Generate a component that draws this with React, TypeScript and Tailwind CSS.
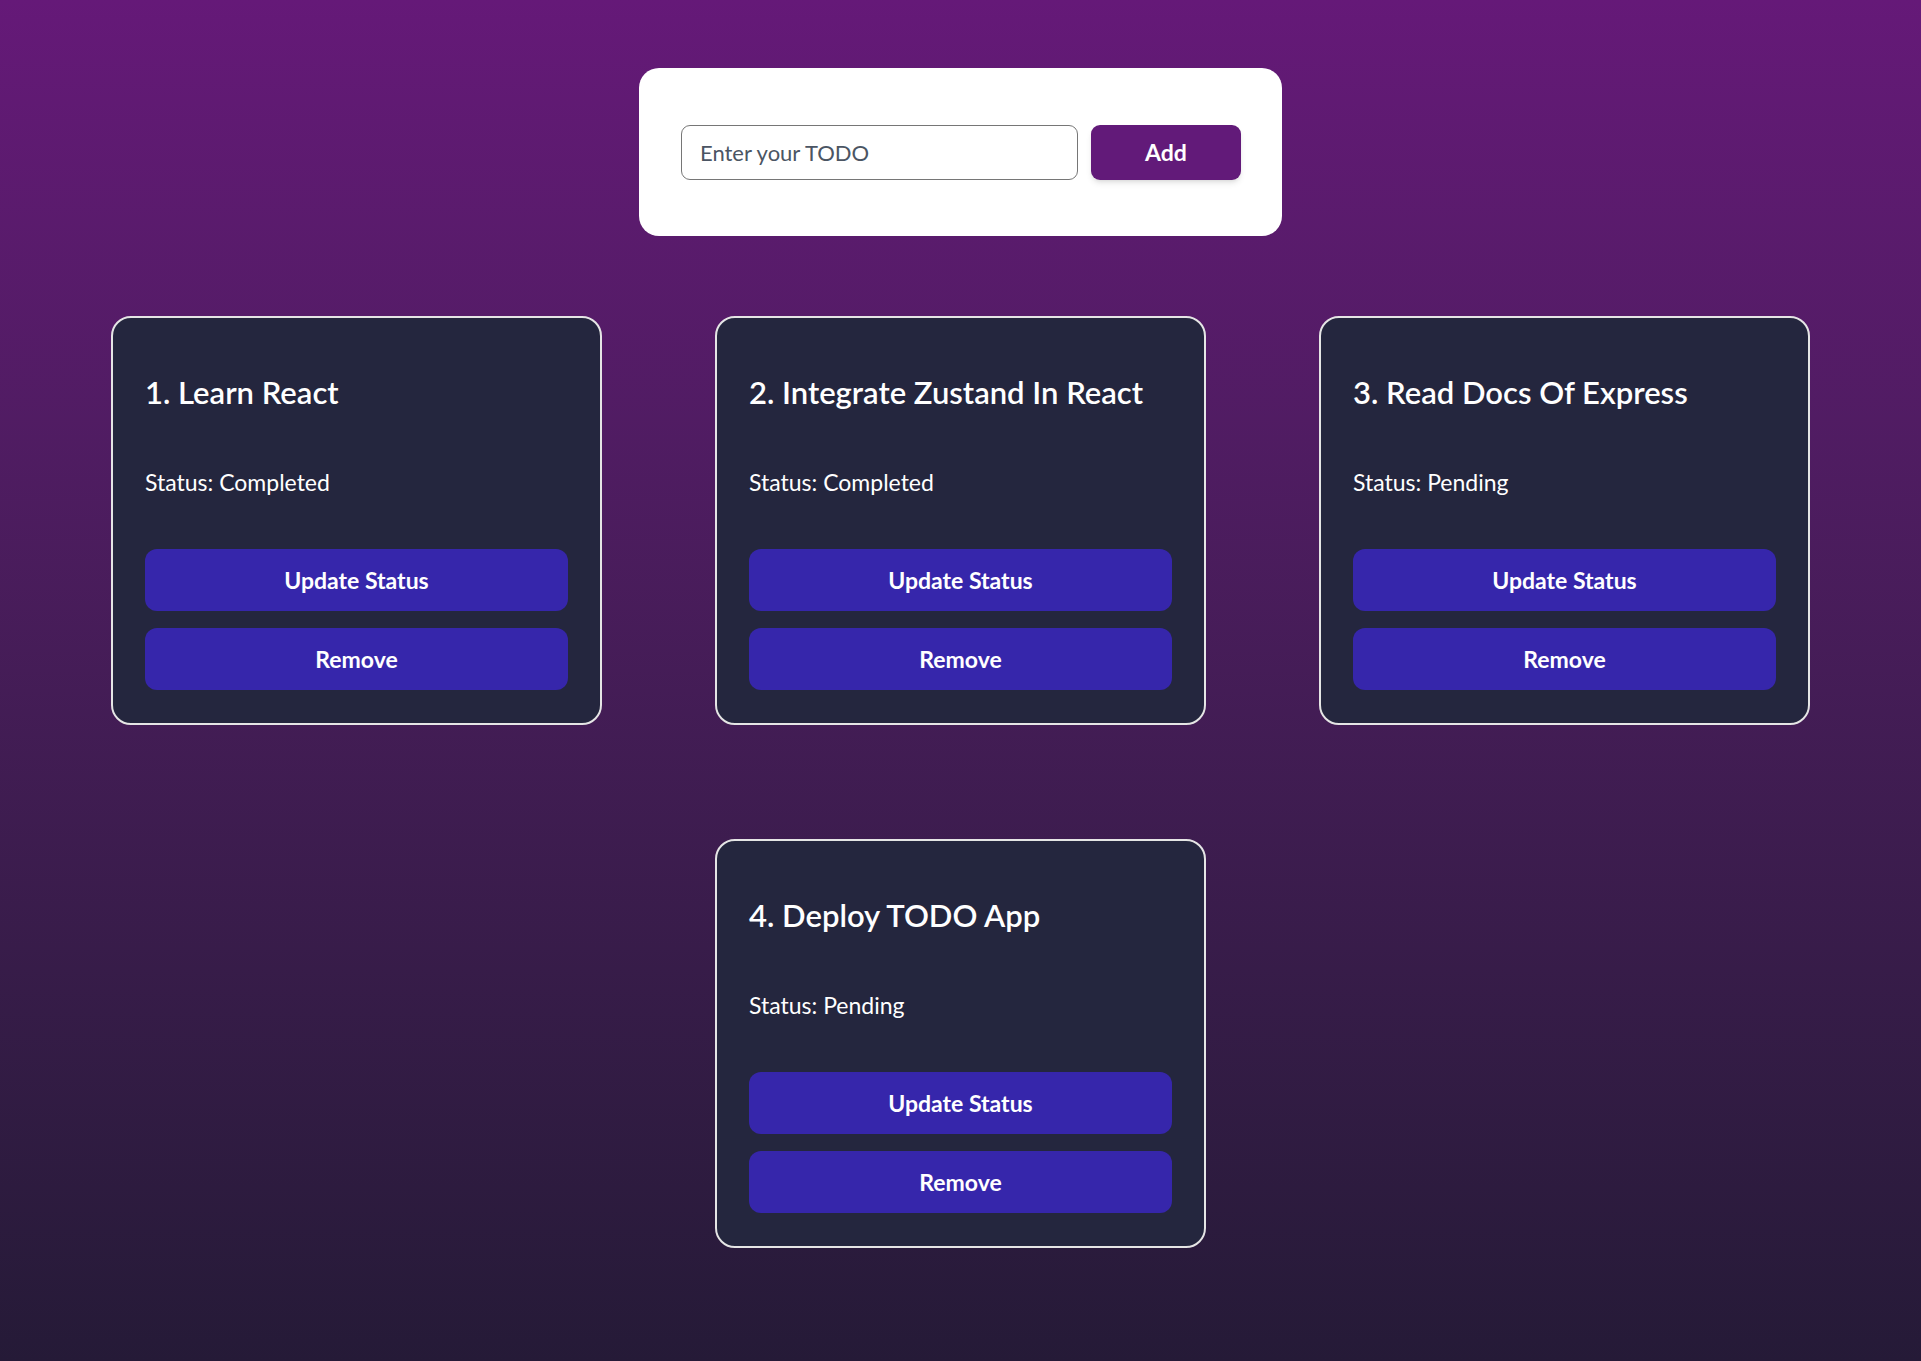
export default function App() {
  const todos = [
    { id: 1, title: 'Learn React', status: 'Completed' },
    { id: 2, title: 'Integrate Zustand In React', status: 'Completed' },
    { id: 3, title: 'Read Docs Of Express', status: 'Pending' },
    { id: 4, title: 'Deploy TODO App', status: 'Pending' },
  ]

  return (
    <div className="flex min-h-screen flex-col items-center bg-gradient-to-b from-[#651978] to-[#251a37] pt-[68px] pb-[114px] font-['Lato',sans-serif]">
      <div className="flex h-[168px] w-[643px] items-center gap-[13px] rounded-[20px] bg-white pl-[42px] pr-[40px]">
        <input
          type="text"
          placeholder="Enter your TODO"
          className="h-[55px] w-[397px] rounded-[9px] border border-[#767676] px-[18px] text-[22px] text-[#111] outline-none placeholder:text-[#4b5563]"
        />
        <button className="h-[55px] w-[150px] rounded-[9px] bg-[#621a79] text-[23px] font-bold text-white shadow-md">
          Add
        </button>
      </div>

      <div className="mt-[80px] flex w-[1700px] flex-wrap justify-center gap-x-[113px] gap-y-[114px]">
        {todos.map((todo) => (
          <div
            key={todo.id}
            className="flex w-[491px] flex-col rounded-[20px] border-2 border-[#e5e5e5] bg-[#24263e] px-[32px] pt-[32px] pb-[33px] text-white"
          >
            <h2 className="mt-[24px] text-[31px] leading-[36px] font-semibold">
              {todo.id}. {todo.title}
            </h2>
            <p className="mt-[57px] text-[23px] leading-[30px]">
              Status: {todo.status}
            </p>
            <div className="mt-[52px] flex flex-col gap-[17px]">
              <button className="h-[62px] w-full rounded-[12px] bg-[#3626ab] text-[23px] font-bold text-white">
                Update Status
              </button>
              <button className="h-[62px] w-full rounded-[12px] bg-[#3626ab] text-[23px] font-bold text-white">
                Remove
              </button>
            </div>
          </div>
        ))}
      </div>
    </div>
  )
}
